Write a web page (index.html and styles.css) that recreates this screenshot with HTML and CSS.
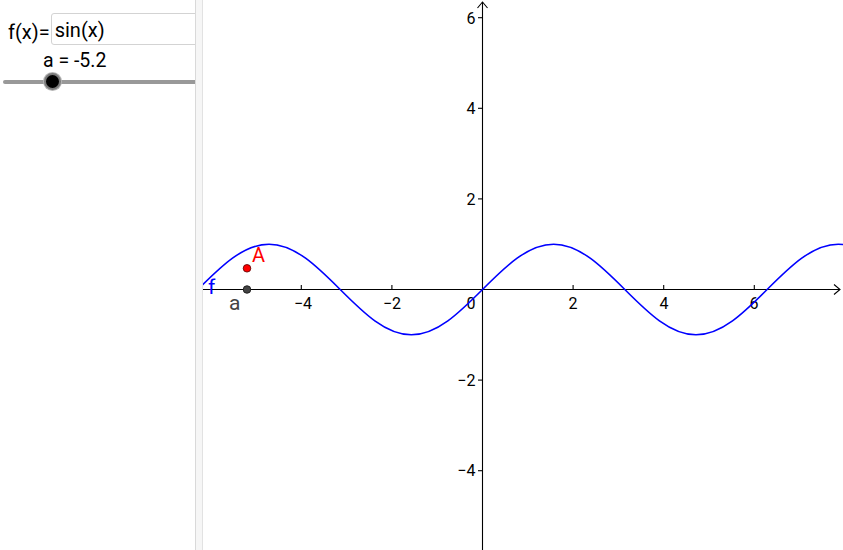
FILE: index.html
```html
<!DOCTYPE html>
<html>
<head>
<meta charset="utf-8">
<link rel="stylesheet" href="styles.css">
</head>
<body>
<div class="app">
  <div class="algebra">
    <div class="fn-row">
      <span class="fn-label">f(x)=</span>
      <div class="fn-input">sin(x)</div>
    </div>
    <div class="slider-label">a = -5.2</div>
    <div class="slider">
      <div class="track"></div>
      <div class="knob"></div>
    </div>
  </div>
  <div class="divider"></div>
  <div class="graphics">
    <svg class="plot" width="640" height="550" viewBox="0 0 640 550">
      <g class="axes">
        <line x1="0" y1="289.5" x2="637" y2="289.5"/>
        <line x1="279.5" y1="2" x2="279.5" y2="550"/>
        <polyline class="arrow" points="274.5,8 279.5,2 284.5,8"/>
        <polyline class="arrow" points="631,284.5 637,289.5 631,294.5"/>
        <line x1="98.3" y1="285" x2="98.3" y2="289.5"/>
        <line x1="188.9" y1="285" x2="188.9" y2="289.5"/>
        <line x1="370.1" y1="285" x2="370.1" y2="289.5"/>
        <line x1="460.7" y1="285" x2="460.7" y2="289.5"/>
        <line x1="551.3" y1="285" x2="551.3" y2="289.5"/>
        <line x1="275" y1="17.7" x2="279.5" y2="17.7"/>
        <line x1="275" y1="108.3" x2="279.5" y2="108.3"/>
        <line x1="275" y1="198.9" x2="279.5" y2="198.9"/>
        <line x1="275" y1="380.1" x2="279.5" y2="380.1"/>
        <line x1="275" y1="470.7" x2="279.5" y2="470.7"/>
      </g>
      <g class="xlabels">
        <text x="100" y="308.5">−4</text>
        <text x="189" y="308.5">−2</text>
        <text x="268" y="308.5">0</text>
        <text x="370" y="308.5">2</text>
        <text x="461" y="308.5">4</text>
        <text x="551" y="308.5">6</text>
      </g>
      <g class="ylabels">
        <text x="272.5" y="23.5">6</text>
        <text x="272.5" y="114">4</text>
        <text x="272.5" y="204.5">2</text>
        <text x="272.5" y="385.5">−2</text>
        <text x="272.5" y="476">−4</text>
      </g>
      <g transform="translate(279.5,289.5) scale(45.3,-45.3)">
        <path class="curve" d="M -6.2832 0 C -5.7709 0.5123 -5.2809 1 -4.7124 1 C -4.1439 1 -3.6539 0.5123 -3.1416 0 C -2.6293 -0.5123 -2.1393 -1 -1.5708 -1 C -1.0023 -1 -0.5123 -0.5123 0 0 C 0.5123 0.5123 1.0023 1 1.5708 1 C 2.1393 1 2.6293 0.5123 3.1416 0 C 3.6539 -0.5123 4.1439 -1 4.7124 -1 C 5.2809 -1 5.7709 -0.5123 6.2832 0 C 6.7955 0.5123 7.2855 1 7.854 1 C 8.4225 1 8.9125 0.5123 9.4248 0"/>
      </g>
      <circle class="pt-a" cx="44" cy="289.5" r="3.8"/>
      <circle class="pt-A" cx="44" cy="268.3" r="3.8"/>
      <text class="lbl-A" x="49" y="261.5">A</text>
      <text class="lbl-a" x="26" y="310">a</text>
      <text class="lbl-f" x="5" y="294">f</text>
    </svg>
  </div>
</div>
</body>
</html>
```
FILE: styles.css
```css
html, body {
  margin: 0;
  padding: 0;
  background: #ffffff;
}
body {
  font-family: Roboto, "Noto Sans", "Liberation Sans", sans-serif;
  color: #000;
}
.app {
  display: flex;
  width: 843px;
  height: 550px;
  overflow: hidden;
}
.algebra {
  flex: none;
  width: 195px;
  overflow: hidden;
}
.fn-row {
  display: flex;
  align-items: stretch;
  padding-top: 13px;
  padding-left: 8px;
  height: 32px;
}
.fn-label {
  font-size: 20px;
  line-height: 32px;
  padding-top: 3px;
  box-sizing: border-box;
  margin-right: 1px;
  white-space: nowrap;
}
.fn-input {
  flex: none;
  width: 170px;
  height: 32px;
  box-sizing: border-box;
  border: 1px solid #d3d3d3;
  border-radius: 3px;
  padding: 3px 0 0 3px;
  font-size: 20px;
  line-height: 26px;
}
.slider-label {
  margin-top: 5px;
  margin-left: 43px;
  font-size: 19.5px;
  line-height: 21px;
  white-space: nowrap;
}
.slider {
  position: relative;
  height: 22px;
  margin-left: 3px;
}
.track {
  position: absolute;
  left: 0;
  right: -10px;
  top: 9px;
  height: 4px;
  border-radius: 2px;
  background: #999999;
}
.knob {
  position: absolute;
  left: 41px;
  top: 2px;
  width: 13px;
  height: 13px;
  border-radius: 50%;
  background: #000;
  border: 2.5px solid #7a7a7a;
  box-shadow: 0 0 0 1px #b5b5b5;
}
.divider {
  flex: none;
  width: 6px;
  background: #f6f6f6;
  border-left: 1px solid #d9d9d9;
  border-right: 1px solid #e2e2e2;
}
.graphics {
  flex: none;
  width: 640px;
  height: 550px;
  overflow: hidden;
}
.plot {
  display: block;
  font-family: Roboto, "Noto Sans", "Liberation Sans", sans-serif;
}
.axes line, .axes polyline {
  stroke: #000;
  stroke-width: 1.1;
  fill: none;
}
.xlabels text {
  font-size: 16px;
  text-anchor: middle;
  fill: #000;
}
.ylabels text {
  font-size: 16px;
  text-anchor: end;
  fill: #000;
}
.curve {
  fill: none;
  stroke: #0000ff;
  stroke-width: 1.6;
  vector-effect: non-scaling-stroke;
}
.pt-a {
  fill: #444;
  stroke: #111;
  stroke-width: 0.8;
}
.pt-A {
  fill: #ff0000;
  stroke: #550000;
  stroke-width: 0.8;
}
.lbl-A {
  font-size: 20px;
  fill: #ff0000;
}
.lbl-a {
  font-size: 21px;
  fill: #444444;
}
.lbl-f {
  font-size: 21px;
  fill: #0000ff;
}
```
